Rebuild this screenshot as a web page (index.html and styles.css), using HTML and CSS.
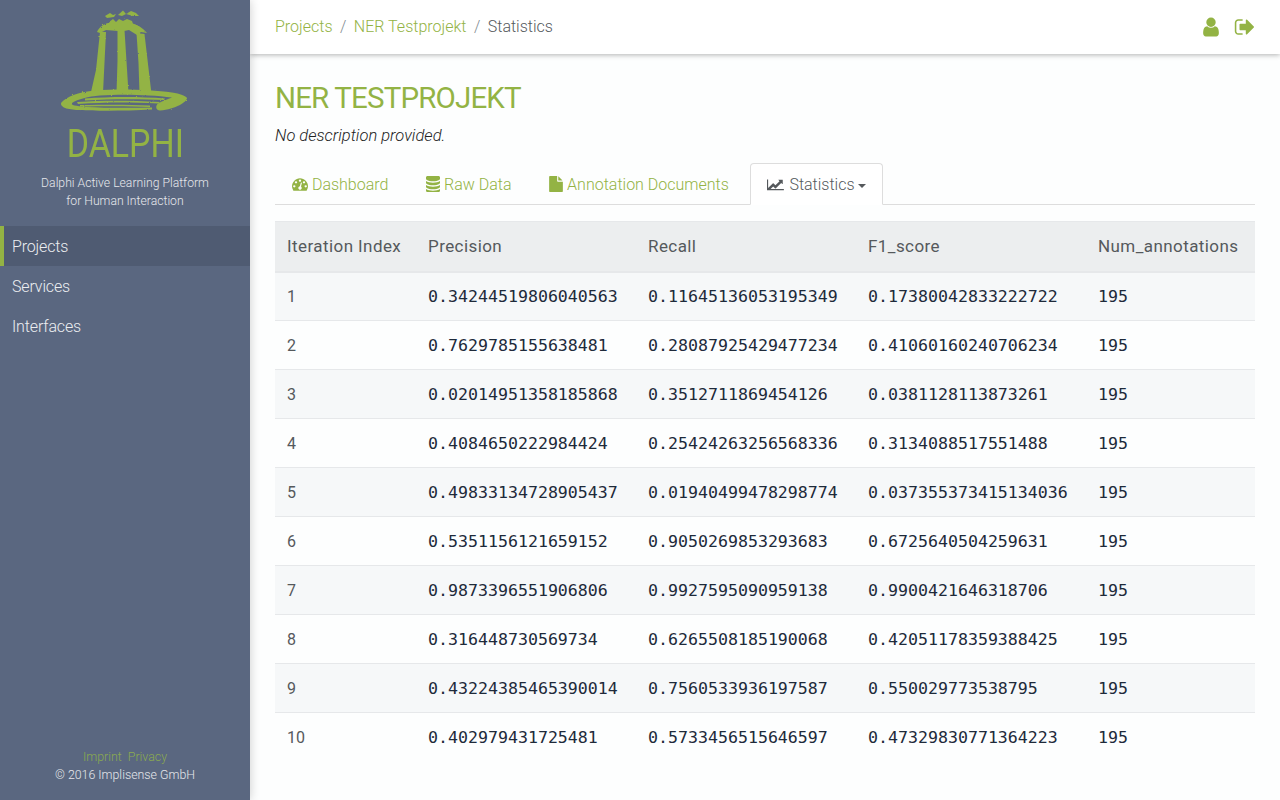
FILE: index.html
```html
<!DOCTYPE html>
<html lang="en">
<head>
    <meta charset="UTF-8">
    <title>NER Testprojekt - Statistics</title>
    <link rel="stylesheet" href="styles.css">
</head>
<body>

    <aside class="sidebar">
        <div class="brand">
            <svg class="logo" viewBox="60 9 130 102" width="130" height="102">
                <defs>
                    <filter id="rough" x="-5%" y="-5%" width="110%" height="110%">
                        <feTurbulence type="fractalNoise" baseFrequency="0.45" numOctaves="2" seed="4"/>
                        <feDisplacementMap in="SourceGraphic" scale="2"/>
                    </filter>
                </defs>
                <g fill="#93b344" filter="url(#rough)">
                    <path d="M105 16l5-3 3 2 3-1-2 3-7 1z"/>
                    <path d="M118 15l5-4.500 3 3.500-4 2z"/>
                    <path d="M126 14l5-3 5 2 3 3-6 0z"/>
                    <path d="M109 22l4-3 3 3 3-3 4 2 4-2 5 2 1 3-23 0z"/>
                    <path d="M97 32c2-5 7-8 11-9l22 0c7 1 13 5 17 10l-6-1-4 3-8-5-5 1-6 0-12-1-6 3z"/>
                    <path d="M100 32l6 0-3 61-12-1 5-22z"/>
                    <path d="M117.500 30l7 0 4 63-12 0 1-32z"/>
                    <path d="M136.500 33l8 1 7 60-12-1-1-30z"/>
                    <path d="M61 103C66 97 78 92 95 90.500C120 88.500 150 89.500 172 92.500C180 93.500 186 96 187 98C187 102 176 109 160 110.500C156 110.500 155 106 158 103.500C162 101 168 99 172 97.500C150 94.500 120 94 100 95.500C88 96.500 78 99 72 103C70 105 76 106 86 107C105 108 130 108 152 107.500L152 109.500C125 111 95 111 80 110C70 110 60 108 61 103Z"/>
                    <path d="M85 98.500c25-2 55-2 80 0l-1 1.500c-24-1-54-1-79 .5z"/>
                    <path d="M77 102c28-2 53-1.500 83 0l-2 1.500c-28-1.500-53-1.500-80 .5z"/>
                    <path d="M80 105c30-.5 50-.5 70 .5l0 1.500c-20-1-40-1-70-.5z"/>
                </g>
            </svg>
            <div class="brand-name">DALPHI</div>
            <p class="brand-text">Dalphi Active Learning Platform<br>for Human Interaction</p>
        </div>

        <nav class="side-nav">
            <a href="#" class="side-link active">Projects</a>
            <a href="#" class="side-link">Services</a>
            <a href="#" class="side-link">Interfaces</a>
        </nav>

        <footer class="side-footer">
            <div class="side-footer-links"><a href="#">Imprint</a> <a href="#">Privacy</a></div>
            <div>&copy; 2016 Implisense GmbH</div>
        </footer>
    </aside>

    <div class="main">
        <header class="topbar">
            <ol class="breadcrumb">
                <li><a href="#">Projects</a></li>
                <li class="sep">/</li>
                <li><a href="#">NER Testprojekt</a></li>
                <li class="sep">/</li>
                <li class="current">Statistics</li>
            </ol>
            <div class="topbar-icons">
                <a href="#"><svg class="icon" viewBox="0 0 1792 1792" width="22" height="22"><path d="M1536 1399q0 109-62.5 187t-150.5 78h-854q-88 0-150.5-78t-62.5-187q0-85 8.5-160.5t31.5-152 58.5-131 94-89 134.5-34.5q131 128 313 128t313-128q76 0 134.5 34.5t94 89 58.5 131 31.5 152 8.5 160.5zm-256-887q0 159-112.5 271.5t-271.5 112.5-271.5-112.5-112.5-271.5 112.5-271.5 271.5-112.5 271.5 112.5 112.5 271.5z"/></svg></a>
                <a href="#"><svg class="icon" viewBox="0 0 1792 1792" width="22" height="22"><path d="M704 1440q0 4 1 20t.5 26.5-3 23.5-10 19.5-20.5 6.5h-320q-119 0-203.5-84.5t-84.5-203.5v-704q0-119 84.5-203.5t203.5-84.5h320q13 0 22.5 9.5t9.5 22.5q0 4 1 20t.5 26.5-3 23.5-10 19.5-20.5 6.5h-320q-66 0-113 47t-47 113v704q0 66 47 113t113 47h312l11.5 1 11.5 3 8 5.5 7 9 2 13.5zm928-544q0 26-19 45l-544 544q-19 19-45 19t-45-19-19-45v-288h-448q-26 0-45-19t-19-45v-384q0-26 19-45t45-19h448v-288q0-26 19-45t45-19 45 19l544 544q19 19 19 45z"/></svg></a>
            </div>
        </header>

        <main class="content">
            <h1 class="project-title">NER Testprojekt</h1>
            <p class="project-desc">No description provided.</p>

            <ul class="tabs">
                <li><a href="#" class="tab">
                    <svg class="icon" viewBox="0 0 1792 1792" width="16" height="16"><path d="M384 1152q0-53-37.5-90.5t-90.5-37.5-90.5 37.5-37.5 90.5 37.5 90.5 90.5 37.5 90.5-37.5 37.5-90.5zm192-448q0-53-37.5-90.5t-90.5-37.5-90.5 37.5-37.5 90.5 37.5 90.5 90.5 37.5 90.5-37.5 37.5-90.5zm428 481l101-382q6-26-7.5-48.5t-38.5-29.5-48 6.5-30 39.5l-101 382q-60 5-107 43.5t-63 98.5q-20 77 20 146t117 89 146-20 89-117q16-60-6-117t-72-91zm660-33q0-53-37.5-90.5t-90.5-37.5-90.5 37.5-37.5 90.5 37.5 90.5 90.5 37.5 90.5-37.5 37.5-90.5zm-640-640q0-53-37.5-90.5t-90.5-37.5-90.5 37.5-37.5 90.5 37.5 90.5 90.5 37.5 90.5-37.5 37.5-90.5zm448 192q0-53-37.5-90.5t-90.5-37.5-90.5 37.5-37.5 90.5 37.5 90.5 90.5 37.5 90.5-37.5 37.5-90.5zm320 448q0 261-141 483-19 29-54 29h-1402q-35 0-54-29-141-221-141-483 0-182 71-348t191-286 286-191 348-71 348 71 286 191 191 286 71 348z"/></svg>
                    Dashboard</a></li>
                <li><a href="#" class="tab">
                    <svg class="icon" viewBox="128 128 1536 1536" width="14" height="16" preserveAspectRatio="none"><path d="M896 768q237 0 443-43t325-127v170q0 69-103 128t-280 93.5-385 34.5-385-34.5-280-93.5-103-128v-170q119 84 325 127t443 43zm0 768q237 0 443-43t325-127v170q0 69-103 128t-280 93.5-385 34.5-385-34.5-280-93.5-103-128v-170q119 84 325 127t443 43zm0-384q237 0 443-43t325-127v170q0 69-103 128t-280 93.5-385 34.5-385-34.5-280-93.5-103-128v-170q119 84 325 127t443 43zm0-1152q208 0 385 34.5t280 93.5 103 128v128q0 69-103 128t-280 93.5-385 34.5-385-34.5-280-93.5-103-128v-128q0-69 103-128t280-93.5 385-34.5z"/></svg>
                    Raw Data</a></li>
                <li><a href="#" class="tab">
                    <svg class="icon" viewBox="128 0 1536 1792" width="14" height="16"><path d="M1152 512v-472q22 14 36 28l408 408q14 14 28 36h-472zm-128 32q0 40 28 68t68 28h544v1056q0 40-28 68t-68 28h-1344q-40 0-68-28t-28-68v-1600q0-40 28-68t68-28h800v544z"/></svg>
                    Annotation Documents</a></li>
                <li><a href="#" class="tab active">
                    <svg class="icon" viewBox="0 0 2048 1792" width="18" height="16"><path d="M1920 1472v128h-1920v-1216h128v1088h1792zm-128-1040v435q0 21-19.5 29.5t-35.5-7.5l-121-121-633 633q-10 10-23 10t-23-10l-233-233-416 416-192-192 585-585q10-10 23-10t23 10l233 233 464-464-121-121q-16-16-7.5-35.5t29.5-19.5h435q14 0 23 9t9 23z"/></svg>
                    Statistics <span class="caret"></span></a></li>
            </ul>

            <table class="stats-table">
                <colgroup>
                    <col class="col-index"><col class="col-wide"><col class="col-wide"><col class="col-f1"><col>
                </colgroup>
                <thead>
                    <tr>
                        <th>Iteration Index</th>
                        <th>Precision</th>
                        <th>Recall</th>
                        <th>F1_score</th>
                        <th>Num_annotations</th>
                    </tr>
                </thead>
                <tbody>
                    <tr><td>1</td><td class="num">0.34244519806040563</td><td class="num">0.11645136053195349</td><td class="num">0.17380042833222722</td><td class="num">195</td></tr>
                    <tr><td>2</td><td class="num">0.7629785155638481</td><td class="num">0.28087925429477234</td><td class="num">0.41060160240706234</td><td class="num">195</td></tr>
                    <tr><td>3</td><td class="num">0.02014951358185868</td><td class="num">0.3512711869454126</td><td class="num">0.0381128113873261</td><td class="num">195</td></tr>
                    <tr><td>4</td><td class="num">0.4084650222984424</td><td class="num">0.25424263256568336</td><td class="num">0.3134088517551488</td><td class="num">195</td></tr>
                    <tr><td>5</td><td class="num">0.49833134728905437</td><td class="num">0.01940499478298774</td><td class="num">0.037355373415134036</td><td class="num">195</td></tr>
                    <tr><td>6</td><td class="num">0.5351156121659152</td><td class="num">0.9050269853293683</td><td class="num">0.6725640504259631</td><td class="num">195</td></tr>
                    <tr><td>7</td><td class="num">0.9873396551906806</td><td class="num">0.9927595090959138</td><td class="num">0.9900421646318706</td><td class="num">195</td></tr>
                    <tr><td>8</td><td class="num">0.316448730569734</td><td class="num">0.6265508185190068</td><td class="num">0.42051178359388425</td><td class="num">195</td></tr>
                    <tr><td>9</td><td class="num">0.43224385465390014</td><td class="num">0.7560533936197587</td><td class="num">0.550029773538795</td><td class="num">195</td></tr>
                    <tr><td>10</td><td class="num">0.402979431725481</td><td class="num">0.5733456515646597</td><td class="num">0.47329830771364223</td><td class="num">195</td></tr>
                </tbody>
            </table>
        </main>
    </div>

</body>
</html>
```

FILE: styles.css
```css
* {
    box-sizing: border-box;
}

html, body {
    height: 100%;
}

body {
    font-family: Roboto, "Liberation Sans", sans-serif;
    font-size: 16px;
    line-height: 24px;
    color: #55595c;
    background-color: #fdfefe;
    margin: 0;
    padding: 0;
    display: flex;
    height: 800px;
    overflow: hidden;
}

a {
    color: #93b344;
    text-decoration: none;
}

.icon {
    fill: currentColor;
}

/* sidebar */
.sidebar {
    width: 250px;
    flex: none;
    display: flex;
    flex-direction: column;
    background-color: #5a6780;
    box-shadow: 0 0 10px rgba(0, 0, 0, 0.2);
    position: relative;
    z-index: 2;
}

.brand {
    display: flex;
    flex-direction: column;
    align-items: center;
    padding-top: 9px;
}

.logo {
    display: block;
}

.brand-name {
    font-size: 39px;
    line-height: 44px;
    font-weight: 400;
    color: #93b344;
    margin-top: 11px;
    transform: scaleX(0.87);
}

.brand-text {
    font-size: 12.2px;
    font-weight: 300;
    line-height: 18px;
    color: #e6e8ec;
    text-align: center;
    margin: 8px 0 0;
}

.side-nav {
    margin-top: 16px;
}

.side-link {
    display: block;
    height: 40px;
    line-height: 42px;
    padding-left: 12px;
    font-weight: 300;
    letter-spacing: -0.15px;
    color: #eceef1;
}

.side-link.active {
    background-color: #4f5b72;
    border-left: 4px solid #93b344;
    padding-left: 8px;
}

.side-footer {
    margin-top: auto;
    padding-bottom: 16px;
    font-size: 12.35px;
    line-height: 18px;
    font-weight: 300;
    color: #e6e8ec;
    text-align: center;
}

.side-footer-links a {
    color: #8bab4f;
    margin: 0 1.5px;
}

/* top bar */
.main {
    flex: 1;
    display: flex;
    flex-direction: column;
    min-width: 0;
}

.topbar {
    height: 54px;
    flex: none;
    display: flex;
    justify-content: space-between;
    align-items: center;
    padding: 0 25px;
    background-color: #fff;
    box-shadow: 0 1px 5px rgba(0, 0, 0, 0.3);
}

.breadcrumb {
    list-style: none;
    display: flex;
    gap: 7.5px;
    margin: 0;
    padding: 0;
    font-weight: 300;
}

.breadcrumb .current {
    color: #55595c;
}

.breadcrumb .sep {
    color: #818a91;
}

.topbar-icons {
    display: flex;
    gap: 12px;
    margin-right: -1px;
}

.topbar-icons a {
    display: block;
    height: 22px;
}

/* page */
.content {
    padding: 26px 25px 0;
}

.project-title {
    font-size: 29.5px;
    line-height: 36px;
    font-weight: 400;
    letter-spacing: -0.85px;
    text-transform: uppercase;
    color: #93b344;
    margin: 0;
}

.project-desc {
    font-size: 16.5px;
    font-style: italic;
    font-weight: 300;
    color: #222;
    margin: 8px 0 0;
}

.tabs {
    list-style: none;
    display: flex;
    gap: 3.7px;
    margin: 15px 0 16px;
    padding: 0;
    border-bottom: 1px solid #dddddd;
}

.tabs li {
    margin-bottom: -1px;
}

.tab {
    display: block;
    padding: 9px 16px 7px;
    border: 1px solid transparent;
    border-radius: 4px 4px 0 0;
    font-weight: 300;
}

.tab .icon {
    vertical-align: -2px;
}

.tab.active {
    color: #55595c;
    background-color: #fff;
    border-color: #ddd #ddd #fff;
}

.tab.active .icon {
    margin-right: 1px;
}

.caret {
    display: inline-block;
    vertical-align: 2px;
    border-top: 4px solid #55595c;
    border-left: 4px solid transparent;
    border-right: 4px solid transparent;
}

/* table */
.stats-table {
    width: 100%;
    table-layout: fixed;
    border-collapse: collapse;
}

.col-index {
    width: 141px;
}

.col-wide {
    width: 220px;
}

.col-f1 {
    width: 230px;
}

.stats-table th {
    height: 50px;
    padding: 0 12px 1px;
    text-align: left;
    font-size: 17px;
    font-weight: 400;
    letter-spacing: 0.42px;
    color: #55595c;
    background-color: #eceeef;
    border-top: 1px solid #e6e8ea;
    border-bottom: 2px solid #e6e8ea;
}

.stats-table td {
    height: 49px;
    padding: 2px 12px 0;
    white-space: nowrap;
    border-bottom: 1px solid #e6e8ea;
    color: #55595c;
}

.stats-table tr:last-child td {
    border-bottom: none;
}

.stats-table tbody tr:nth-child(odd) {
    background-color: #f6f8f9;
}

.stats-table td.num {
    font-family: "DejaVu Sans Mono", monospace;
    font-size: 16.6px;
    color: #1e2a3a;
}
```
